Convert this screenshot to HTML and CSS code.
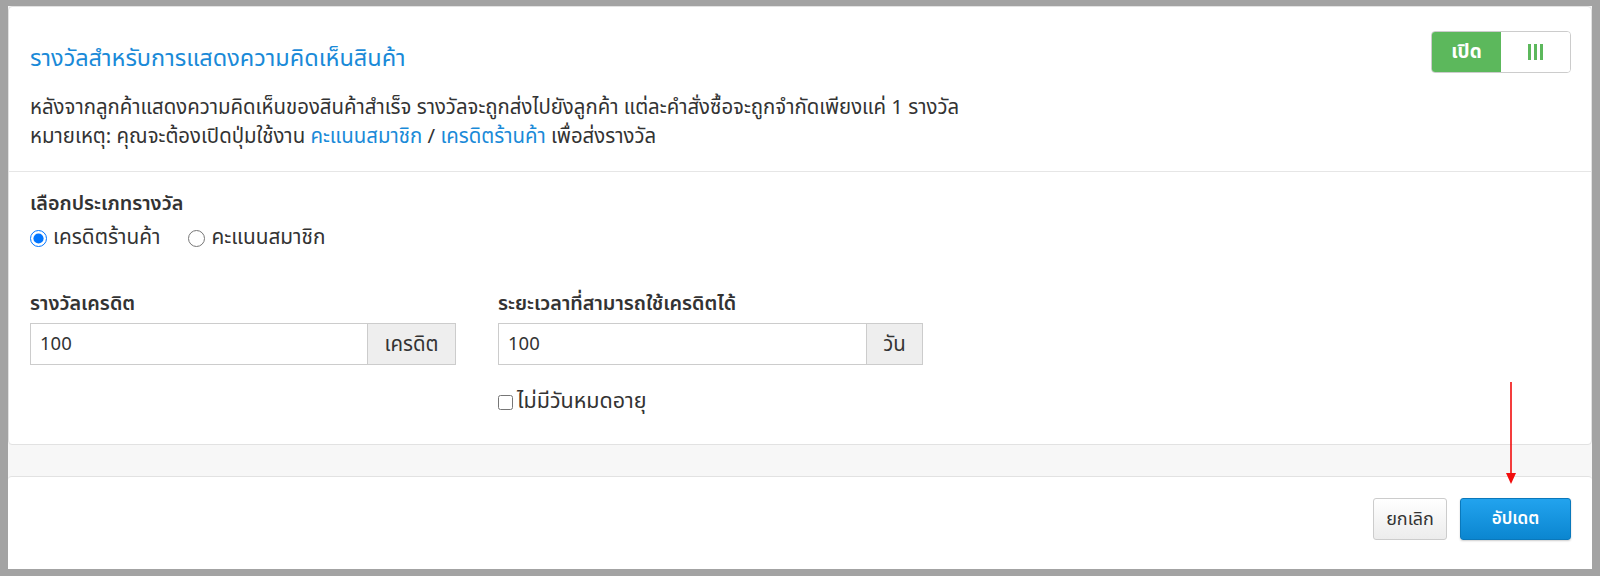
FILE: index.html
```html
<!DOCTYPE html>
<html lang="th">
<head>
<meta charset="utf-8">
<title>รางวัลสำหรับการแสดงความคิดเห็นสินค้า</title>
<link rel="stylesheet" href="styles.css">
</head>
<body>
<div class="modal">
  <section class="panel">
    <header class="panel-head">
      <div class="head-row">
        <h1 class="title">รางวัลสำหรับการแสดงความคิดเห็นสินค้า</h1>
        <div class="toggle">
          <span class="toggle-on">เปิด</span>
          <span class="toggle-handle"><i></i><i></i><i></i></span>
        </div>
      </div>
      <p class="desc">หลังจากลูกค้าแสดงความคิดเห็นของสินค้าสำเร็จ รางวัลจะถูกส่งไปยังลูกค้า แต่ละคำสั่งซื้อจะถูกจำกัดเพียงแค่ 1 รางวัล<br>หมายเหตุ: คุณจะต้องเปิดปุ่มใช้งาน <a href="#" class="link">คะแนนสมาชิก</a> / <a href="#" class="link">เครดิตร้านค้า</a> เพื่อส่งรางวัล</p>
    </header>
    <div class="panel-body">
      <div class="label">เลือกประเภทรางวัล</div>
      <div class="radios">
        <label class="opt"><input type="radio" name="type" checked><span>เครดิตร้านค้า</span></label>
        <label class="opt"><input type="radio" name="type"><span>คะแนนสมาชิก</span></label>
      </div>
      <div class="fields">
        <div class="field">
          <div class="label">รางวัลเครดิต</div>
          <div class="group">
            <input class="control" type="text" value="100">
            <span class="addon addon-credit">เครดิต</span>
          </div>
        </div>
        <div class="field">
          <div class="label">ระยะเวลาที่สามารถใช้เครดิตได้</div>
          <div class="group">
            <input class="control" type="text" value="100">
            <span class="addon addon-day">วัน</span>
          </div>
          <label class="check"><input type="checkbox"><span>ไม่มีวันหมดอายุ</span></label>
        </div>
      </div>
    </div>
  </section>
  <footer class="footer">
    <button class="btn btn-cancel" type="button">ยกเลิก</button>
    <button class="btn btn-update" type="button">อัปเดต</button>
  </footer>
  <svg class="arrow" width="14" height="104" viewBox="0 0 14 104" aria-hidden="true">
    <line x1="7" y1="0" x2="7" y2="94" stroke="#f20d0d" stroke-width="1.6"/>
    <polygon points="2,91 12,91 7,102" fill="#f20d0d"/>
  </svg>
</div>
</body>
</html>
```

FILE: styles.css
```css
* { box-sizing: border-box; }
html, body { margin: 0; height: 100%; }
body {
  background: #a3a3a3;
  padding: 6px 8px 7px 8px;
  font-family: "Noto Sans Thai", "Noto Sans", "Open Sans", sans-serif;
  font-size: 20.4px;
  color: #333;
}
.modal {
  position: relative;
  height: 563px;
  background: #f7f7f7;
  display: flex;
  flex-direction: column;
}
.panel {
  height: 439px;
  background: #fff;
  border: 1px solid #e2e2e2;
  border-radius: 4px;
}
.panel-head {
  padding: 24px 20px 20px 21px;
  border-bottom: 1px solid #e6e6e6;
}
.head-row {
  display: flex;
  justify-content: space-between;
  align-items: flex-start;
}
.title {
  margin: 13px 0 0 0;
  font-size: 23.5px;
  line-height: 30px;
  font-weight: 400;
  color: #1a8ad8;
}
.toggle {
  display: flex;
  width: 140px;
  height: 42px;
  border: 1px solid #ccc;
  border-radius: 4px;
  overflow: hidden;
}
.toggle-on {
  width: 69px;
  background: #5cb85c;
  color: #fff;
  font-size: 19px;
  font-weight: 700;
  display: flex;
  align-items: center;
  justify-content: center;
}
.toggle-handle {
  flex: 1;
  background: #fff;
  display: flex;
  align-items: center;
  justify-content: center;
  gap: 3px;
}
.toggle-handle i {
  display: block;
  width: 3px;
  height: 16px;
  background: #5cb85c;
}
.desc {
  margin: 19px 0 0 0;
  line-height: 29px;
}
.link { color: #1a8ad8; text-decoration: none; }
.panel-body {
  padding: 20px 21px 0 21px;
}
.label {
  font-size: 19.8px;
  font-weight: 600;
  line-height: 24px;
}
.radios {
  display: flex;
  gap: 28px;
  margin-top: 10px;
  line-height: 24px;
  font-size: 20.8px;
}
.opt, .check {
  display: flex;
  align-items: center;
  gap: 6px;
}
.opt input {
  width: 17px;
  height: 17px;
  margin: 0;
}
.fields {
  display: grid;
  grid-template-columns: 426px 425px;
  column-gap: 42px;
  margin-top: 42px;
}
.group {
  display: flex;
  height: 42px;
  margin-top: 7px;
}
.control {
  flex: 1;
  min-width: 0;
  border: 1px solid #ccc;
  border-right: 0;
  padding: 0 9px;
  font: inherit;
  font-size: 18.5px;
  color: #333;
  outline: none;
}
.addon {
  border: 1px solid #ccc;
  background: #eee;
  display: flex;
  align-items: center;
  justify-content: center;
}
.addon-credit { width: 89px; }
.addon-day { width: 57px; }
.check {
  margin-top: 25px;
  line-height: 24px;
  gap: 4px;
  font-size: 21.5px;
}
.check input {
  width: 15px;
  height: 15px;
  margin: 0;
}
.footer {
  margin-top: auto;
  height: 93px;
  background: #fff;
  border-top: 1px solid #e2e2e2;
  border-radius: 4px 4px 0 0;
  display: flex;
  justify-content: flex-end;
  align-items: flex-start;
  gap: 13px;
  padding: 21px 21px 0 0;
}
.btn {
  height: 42px;
  font: inherit;
  border-radius: 3px;
  cursor: pointer;
}
.btn-cancel {
  width: 74px;
  background: linear-gradient(#ffffff, #ececec);
  border: 1px solid #ccc;
  color: #333;
  font-size: 18px;
}
.btn-update {
  width: 111px;
  background: linear-gradient(#22a3ee, #0b86d0);
  border: 1px solid #0a78bb;
  color: #fff;
  font-size: 17px;
  font-weight: 600;
  box-shadow: 0 1px 2px rgba(0,0,0,0.2);
}
.arrow {
  position: absolute;
  left: 1496px;
  top: 376px;
}
```
